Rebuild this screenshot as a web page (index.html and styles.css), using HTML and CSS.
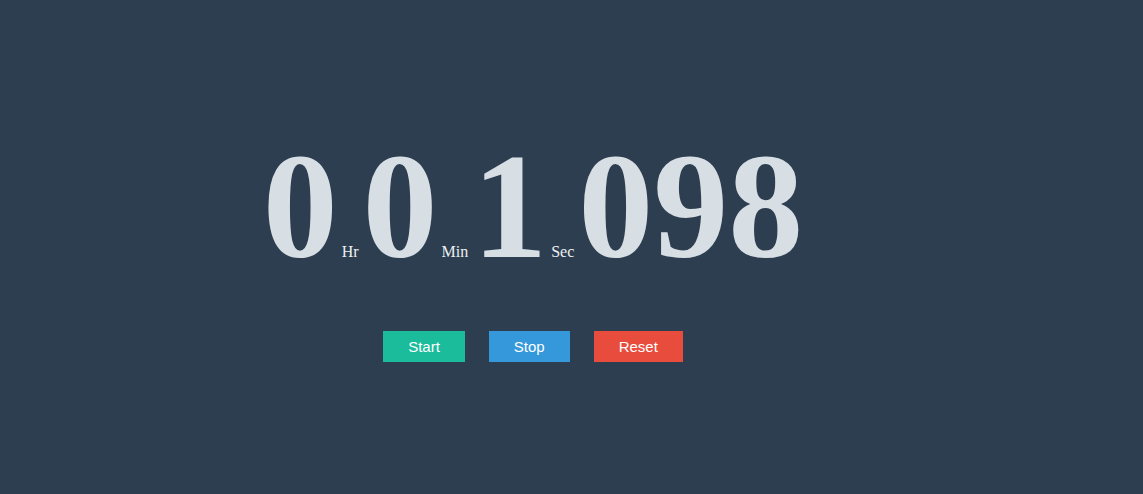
FILE: index.html
```html
<!DOCTYPE html>
<html>
<head>
<meta charset="utf-8">
<link rel="stylesheet" href="styles.css">
</head>
<body>
<div class="wrap">
  <div class="timer"><span class="num">0</span> <span class="label">Hr</span> <span class="num">0</span> <span class="label">Min</span> <span class="num">1</span> <span class="label">Sec</span> <span class="num">098</span></div>
  <div class="controls">
    <button class="btn start">Start</button>
    <button class="btn stop">Stop</button>
    <button class="btn reset">Reset</button>
  </div>
</div>
</body>
</html>
```
FILE: styles.css
```css
html, body {
  margin: 0;
  padding: 0;
  background: #2d3e50;
  height: 100%;
}
.wrap {
  width: 1066px;
  padding-top: 131px;
}
.timer {
  text-align: center;
  font-family: "Liberation Serif", "Times New Roman", serif;
  font-size: 16px;
  white-space: nowrap;
  color: #ecf0f1;
}
.num {
  font-size: 150px;
  font-weight: bold;
  line-height: 1;
  color: #d7dee4;
}
.label {
  font-size: 16px;
  color: #ecf0f1;
}
.controls {
  display: flex;
  justify-content: center;
  gap: 24px;
  margin-top: 50px;
}
.btn {
  font-family: "Liberation Sans", Arial, sans-serif;
  font-size: 15px;
  color: #fff;
  border: none;
  padding: 0 25px;
  height: 31px;
  line-height: 31px;
  cursor: pointer;
}
.start { background: #1abc9c; }
.stop { background: #3498db; }
.reset { background: #e74c3c; }
```
